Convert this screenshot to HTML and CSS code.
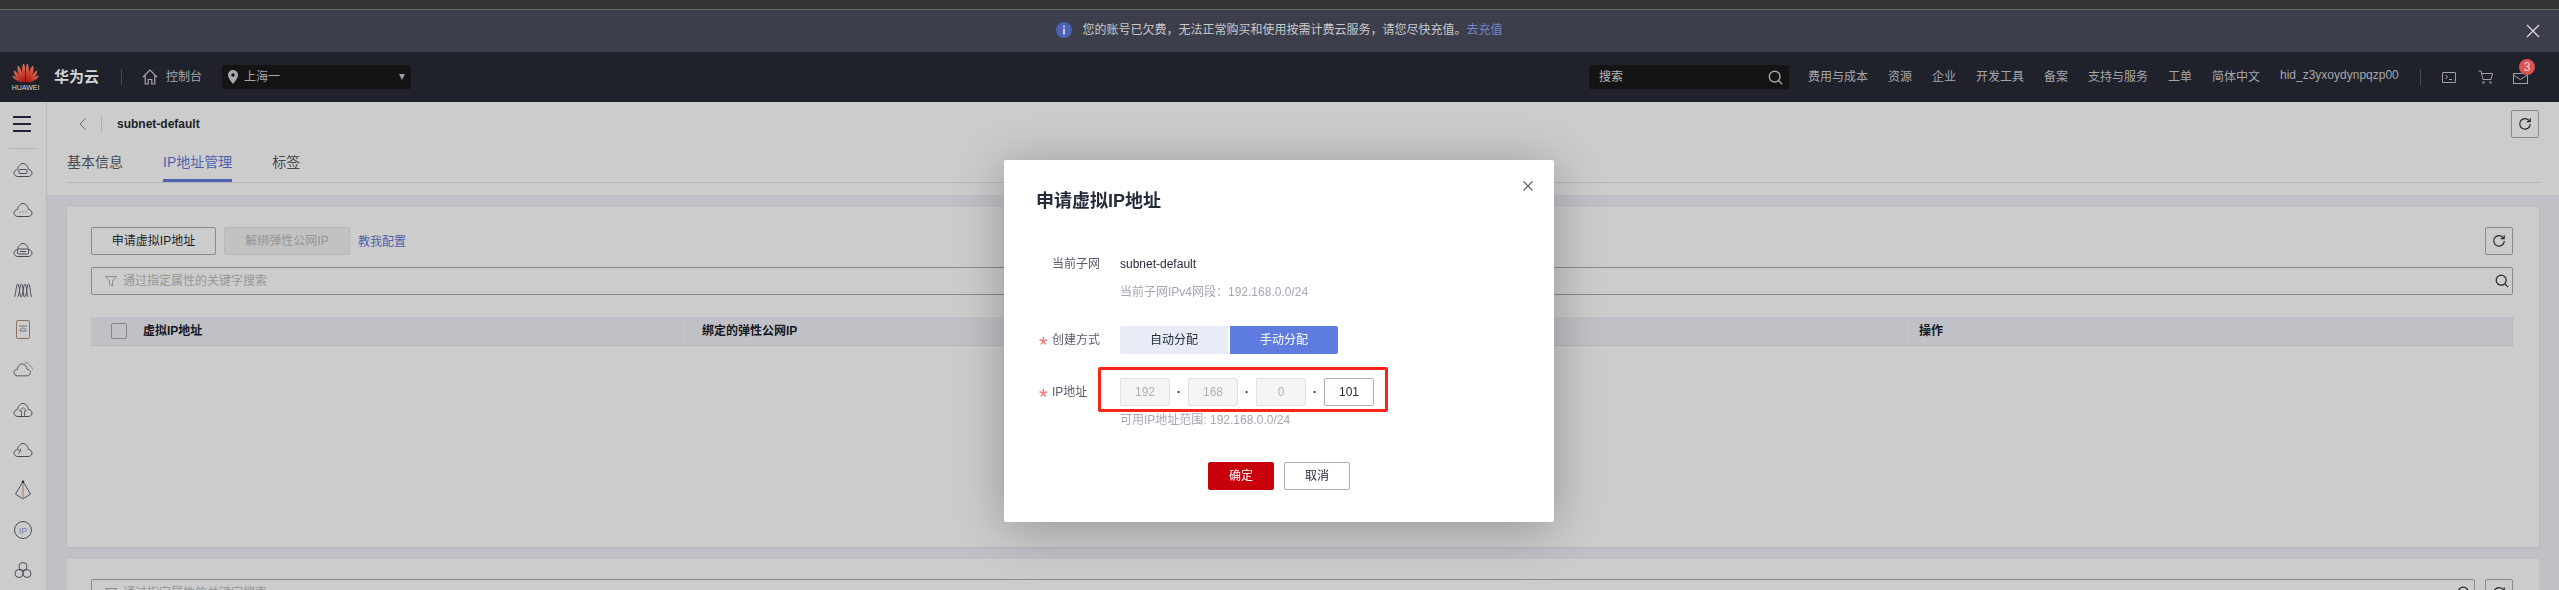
FILE: index.html
```html
<!DOCTYPE html>
<html lang="zh-CN">
<head>
<meta charset="utf-8">
<title>申请虚拟IP地址</title>
<link rel="stylesheet" href="styles.css">
</head>
<body>
<svg class="defs" width="0" height="0" aria-hidden="true">
  <defs>
    <symbol id="cloud" viewBox="0 0 20 16"><path d="M5 14.5C2.6 14.5 1 13 1 11c0-2 1.500-3.400 3.600-3.400C5 4.300 7.300 1.500 10 1.500s5 2.800 5.400 6.100C17.500 7.600 19 9 19 11c0 2-1.600 3.500-4 3.500z"/></symbol>
    <symbol id="refresh" viewBox="0 0 14 14"><path d="M11.600 4.200A5.300 5.300 0 1 0 12.300 7"/><path d="M12.200 1.300v3.400H8.800"/></symbol>
    <symbol id="search" viewBox="0 0 14 14"><circle cx="6.200" cy="6.200" r="5"/><path d="M9.800 9.800l3.400 3.400"/></symbol>
    <linearGradient id="petal" x1="0" y1="0" x2="0" y2="1"><stop offset="0" stop-color="#d9795a"/><stop offset="1" stop-color="#b3150f"/></linearGradient>
  </defs>
</svg>

<div class="strip"></div>
<div class="banner">
  <svg class="banner-icon" viewBox="0 0 16 16"><circle cx="8" cy="8" r="8" fill="#4c62b4"/><rect x="7.200" y="6.500" width="1.600" height="6" fill="#e6e8f2"/><rect x="7.200" y="3.500" width="1.600" height="1.600" fill="#e6e8f2"/></svg>
  <span class="banner-text">您的账号已欠费，无法正常购买和使用按需计费云服务，请您尽快充值。</span>
  <a class="banner-link">去充值</a>
  <svg class="banner-close" viewBox="0 0 14 14"><path d="M1 1l12 12M13 1L1 13"/></svg>
</div>

<header class="topbar">
  <div class="logo">
    <svg class="logo-mark" viewBox="0 0 27 20">
      <g fill="url(#petal)">
        <path d="M11.800 19C9.500 14 9 6 11.400 0.500c1.900 0.500 2 5 1.500 18.500z"/>
        <path d="M15.200 19C17.500 14 18 6 15.600 0.500c-1.900 0.500-2 5-1.500 18.500z"/>
        <path d="M11 19C7.500 15.500 4.500 9 5.800 2.800 7.500 3.200 9.500 6 12 19z"/>
        <path d="M16 19C19.500 15.500 22.500 9 21.200 2.800 19.500 3.200 17.500 6 15 19z"/>
        <path d="M10.500 19.200C6 16.500 2 13 1.800 7.500 3.500 7.500 6.500 11 11 19z"/>
        <path d="M16.500 19.200C21 16.500 25 13 25.200 7.500 23.500 7.500 20.500 11 16 19z"/>
        <path d="M10 19.500C5.500 18.500 1.500 16.500 0.200 12.800 2 12.300 6 15 10.500 19.500z"/>
        <path d="M17 19.500C21.500 18.500 25.500 16.500 26.800 12.800 25 12.300 21 15 16.500 19.500z"/>
      </g>
    </svg>
    <span class="logo-word">HUAWEI</span>
  </div>
  <span class="brand">华为云</span>
  <span class="vsep brand-sep"></span>
  <svg class="home-icon" viewBox="0 0 16 16"><path d="M1 8l7-7 7 7M3.200 6.500V15h3v-4.500h3.600V15h3V6.500"/></svg>
  <span class="console">控制台</span>
  <div class="region">
    <svg class="pin" viewBox="0 0 10 14"><path d="M5 0a5 5 0 0 0-5 5c0 3.300 5 9 5 9s5-5.700 5-9a5 5 0 0 0-5-5z" fill="#a9abb0"/><circle cx="5" cy="5" r="1.800" fill="#141414"/></svg>
    <span class="region-name">上海一</span>
    <span class="region-arrow"></span>
  </div>
  <div class="top-search">
    <span>搜索</span>
    <svg class="top-search-icon"><use href="#search"/></svg>
  </div>
  <nav class="nav">
    <a>费用与成本</a><a>资源</a><a>企业</a><a>开发工具</a><a>备案</a><a>支持与服务</a><a>工单</a><a>简体中文</a>
    <a class="user">hid_z3yxoydynpqzp00</a>
  </nav>
  <span class="vsep nav-sep"></span>
  <svg class="tool term" viewBox="0 0 14 11"><rect x="0.500" y="0.500" width="13" height="10" rx="0.500"/><path d="M3.500 3l2 2-2 2M7 7.500h3"/></svg>
  <svg class="tool cart" viewBox="0 0 15 14"><path d="M0.500 1h2.500l2 8.500h8L14.500 3.500H3.500"/><circle cx="5.500" cy="12.500" r="0.900"/><circle cx="12.500" cy="12.500" r="0.900"/></svg>
  <div class="mail">
    <svg class="tool mail-icon" viewBox="0 0 15 11"><rect x="0.500" y="0.500" width="14" height="10"/><path d="M0.500 2l7 4.500 7-4.500"/></svg>
    <span class="badge">3</span>
  </div>
</header>

<div class="main">
  <aside class="sidebar">
    <div class="menu"><span></span><span></span><span></span></div>
    <div class="side-rule"></div>
    <div class="side-icons">
      <svg class="side" viewBox="0 0 20 16"><use href="#cloud"/><rect x="6" y="7.500" width="8" height="4" rx="1"/></svg>
      <svg class="side" viewBox="0 0 20 16"><use href="#cloud"/><path d="M6.500 10h1M9.500 10h1M12.500 10h1"/></svg>
      <svg class="side" viewBox="0 0 20 16"><use href="#cloud"/><rect x="4.500" y="7" width="11" height="5" rx="1.200"/><path d="M7 9.500h6"/></svg>
      <svg class="side" viewBox="0 0 20 16"><path d="M1 15C2.800 15 3 2 4.800 2S6.500 15 8 15M4.600 15C6.400 15 6.600 2 8.400 2S10 15 11.600 15M8.200 15C10 15 10.200 2 12 2s1.700 13 3.300 13M11.800 15C13.600 15 13.800 2 15.600 2S17.200 15 19 15"/></svg>
      <svg class="side phone" viewBox="0 0 20 20"><rect x="3.500" y="0.500" width="13" height="18" rx="1.500" stroke="#8a7266"/><path d="M7 11c0-2 1.200-3 3-3s3 1 3 3zM6 6h8" stroke-width="0.700"/></svg>
      <svg class="side" viewBox="0 0 20 16"><use href="#cloud" transform="translate(0 0.500) scale(.92)"/><path d="M11.500 1.200c2-1 5-.2 5.600 2.800 1.600.4 2.500 2 2.200 3.500" stroke="#8b8b8b"/></svg>
      <svg class="side" viewBox="0 0 20 16"><use href="#cloud"/><path d="M10 5.500l-3.500 3.500h2v5.500h3V9h2z" stroke-width="0.800"/></svg>
      <svg class="side" viewBox="0 0 20 16"><use href="#cloud"/><path d="M4 7l3 2.500M7 10l.8-3.500M7 10l-1.500 1.800" stroke-width="0.900"/></svg>
      <svg class="side" viewBox="0 0 20 20"><path d="M10 1.500L2.500 14 10 19l7.500-5z"/><path d="M10 1.500V19" stroke="#a8784d"/><circle cx="10" cy="1.800" r="1.200" fill="#222" stroke="none"/></svg>
      <svg class="side" viewBox="0 0 20 20"><circle cx="10" cy="10" r="8.500"/><text class="ip-glyph" x="10" y="13.500">IP</text></svg>
      <svg class="side" viewBox="0 0 20 20"><circle cx="10" cy="6.500" r="4"/><circle cx="6" cy="13.500" r="4"/><circle cx="14" cy="13.500" r="4"/></svg>
    </div>
  </aside>

  <div class="content">
    <div class="page-head">
      <div class="crumb">
        <svg class="back" viewBox="0 0 8 14"><path d="M7 1L1 7l6 6"/></svg>
        <span class="crumb-sep"></span>
        <span class="crumb-title">subnet-default</span>
        <button class="icon-btn crumb-refresh"><svg class="ico"><use href="#refresh"/></svg></button>
      </div>
      <div class="tabs">
        <a class="tab">基本信息</a>
        <a class="tab active">IP地址管理</a>
        <a class="tab">标签</a>
      </div>
    </div>

    <div class="panels">
      <section class="card first">
        <div class="toolbar">
          <button class="btn">申请虚拟IP地址</button>
          <button class="btn disabled">解绑弹性公网IP</button>
          <a class="help">教我配置</a>
          <button class="icon-btn push"><svg class="ico"><use href="#refresh"/></svg></button>
        </div>
        <div class="filter">
          <svg class="funnel" viewBox="0 0 12 11"><path d="M0.500 0.500h11L7.500 5v5l-3-1.500V5z"/></svg>
          <span class="placeholder">通过指定属性的关键字搜索</span>
          <svg class="ico filter-search"><use href="#search"/></svg>
        </div>
        <div class="thead">
          <div class="th th-check"><span class="check"></span>虚拟IP地址</div>
          <div class="th">绑定的弹性公网IP</div>
          <div class="th">操作</div>
        </div>
      </section>
      <section class="card">
        <div class="toolbar">
          <div class="filter inline">
            <svg class="funnel" viewBox="0 0 12 11"><path d="M0.500 0.500h11L7.500 5v5l-3-1.500V5z"/></svg>
            <span class="placeholder">通过指定属性的关键字搜索</span>
            <svg class="ico filter-search"><use href="#search"/></svg>
          </div>
          <button class="icon-btn"><svg class="ico"><use href="#refresh"/></svg></button>
        </div>
      </section>
    </div>
  </div>
</div>

<div class="overlay">
  <div class="dialog">
    <svg class="dialog-close" viewBox="0 0 10 10"><path d="M0.500 0.500l9 9M9.500 0.500l-9 9"/></svg>
    <h2 class="dialog-title">申请虚拟IP地址</h2>
    <div class="row row-subnet">
      <span class="label">当前子网</span>
      <div class="value">subnet-default</div>
    </div>
    <div class="row row-hint">
      <span class="label"></span>
      <div class="hint">当前子网IPv4网段：192.168.0.0/24</div>
    </div>
    <div class="row row-mode">
      <span class="label"><i class="star">*</i>创建方式</span>
      <div class="seg">
        <span class="seg-item">自动分配</span>
        <span class="seg-item on">手动分配</span>
      </div>
    </div>
    <div class="row row-ip">
      <span class="label"><i class="star">*</i>IP地址</span>
      <div class="octets">
        <span class="octet off">192</span><span class="dot">·</span>
        <span class="octet off">168</span><span class="dot">·</span>
        <span class="octet off">0</span><span class="dot">·</span>
        <span class="octet">101</span>
        <span class="redbox"></span>
      </div>
    </div>
    <div class="row row-range">
      <span class="label"></span>
      <div class="hint">可用IP地址范围: 192.168.0.0/24</div>
    </div>
    <div class="actions">
      <button class="act primary">确定</button>
      <button class="act">取消</button>
    </div>
  </div>
</div>
</body>
</html>
```
FILE: styles.css
```css
* { box-sizing: border-box; }
html, body { margin: 0; height: 590px; overflow: hidden; }
body {
  background: #ccc;
  color: #1f2330;
  font-family: "Liberation Sans", "Noto Sans CJK SC", sans-serif;
  font-size: 12px;
  line-height: 20px;
}
button { font: inherit; padding: 0; cursor: default; }
.defs { position: absolute; }

.strip { height: 10px; background: #333; border-bottom: 1px solid #6a6a6c; }

.banner {
  position: relative;
  height: 42px;
  background: #3c3f4b;
  display: flex;
  align-items: center;
  justify-content: center;
  color: #c9cacc;
  padding-bottom: 2px;
}
.banner-icon { width: 16px; height: 16px; margin-right: 10px; }
.banner-text { width: 384px; }
.banner-link { color: #7485c9; margin-left: 0; }
.banner-close {
  position: absolute;
  right: 19px;
  top: 14px;
  width: 14px;
  height: 14px;
  fill: none;
  stroke: #d8d8da;
  stroke-width: 1.400;
}

.topbar {
  height: 50px;
  background: #1f222b;
  display: flex;
  align-items: center;
  padding: 0 31px 0 12px;
  color: #a6a7ab;
}
.logo { width: 27px; display: flex; flex-direction: column; align-items: center; }
.logo-mark { width: 27px; height: 20px; display: block; }
.logo-word { font-size: 7px; line-height: 8px; color: #d8d8d8; margin-top: 1px; }
.brand { margin-left: 15px; font-size: 15px; font-weight: 700; color: #d5d5d6; width: 45px; }
.vsep { width: 1px; height: 16px; background: #474a52; }
.brand-sep { margin-left: 22px; }
.home-icon {
  width: 16px; height: 16px; margin-left: 20px;
  fill: none; stroke: #a6a7ab; stroke-width: 1.200;
}
.console { margin-left: 8px; width: 36px; }
.region {
  margin-left: 20px;
  width: 189px;
  height: 24px;
  background: #141414;
  border-radius: 2px;
  display: flex;
  align-items: center;
  padding: 0 6px;
}
.pin { width: 10px; height: 14px; }
.region-name { margin-left: 6px; }
.region-arrow {
  margin-left: auto;
  border-style: solid;
  border-width: 6px 3.500px 0;
  border-color: #9b9da2 transparent transparent;
}
.top-search {
  margin-left: auto;
  width: 200px;
  height: 24px;
  background: #141414;
  border-radius: 2px;
  display: flex;
  align-items: center;
  justify-content: space-between;
  padding: 0 6px 0 10px;
  color: #b8b9bc;
}
.top-search-icon { width: 15px; height: 15px; fill: none; stroke: #a6a7ab; stroke-width: 1.300; }
.nav { display: flex; gap: 20px; margin-left: 19px; }
.user { width: 120px; margin-top: -2px; }
.nav-sep { margin-left: 20px; }
.tool { fill: none; stroke: #a0a1a6; stroke-width: 1; }
.term { width: 14px; height: 11px; margin-left: 21px; }
.cart { width: 15px; height: 14px; margin-left: 22px; }
.mail { position: relative; margin-left: 20px; display: flex; }
.mail-icon { width: 15px; height: 11px; margin-top: 3px; }
.badge {
  position: absolute;
  left: 6px;
  top: -11px;
  width: 16px;
  height: 16px;
  border-radius: 50%;
  background: #d9534f;
  color: #f3d9d8;
  text-align: center;
  line-height: 16px;
}

.main { display: flex; height: 488px; }
.sidebar { width: 47px; flex: none; border-right: 1px solid #b9b9b9; background: #ccc; }
.menu { display: flex; flex-direction: column; gap: 5px; padding: 14px 0 0 13px; height: 46px; }
.menu span { width: 18px; height: 2px; background: #1f2238; }
.side-rule { height: 1px; margin: 0 9px; background: #b5b5b5; }
.side-icons { display: flex; flex-direction: column; align-items: center; padding-top: 1px; }
.side {
  width: 20px;
  height: 20px;
  margin: 10px 0;
  fill: none;
  stroke: #4d4f5a;
  stroke-width: 1;
  flex: none;
}
.ip-glyph {
  font-family: "Liberation Sans", sans-serif;
  font-size: 9px;
  fill: #7778a0;
  stroke: none;
  text-anchor: middle;
}

.content { flex: 1; display: flex; flex-direction: column; min-width: 0; }
.page-head { height: 93px; flex: none; background: #ccc; padding: 8px 20px 0; }
.crumb { display: flex; align-items: center; height: 28px; padding-left: 12px; }
.back { width: 8px; height: 14px; fill: none; stroke: #6b6b70; stroke-width: 1; }
.crumb-sep { width: 1px; height: 16px; background: #b0b0b0; margin-left: 14px; }
.crumb-title { margin-left: 15px; font-weight: 700; color: #1c1f28; }
.crumb-refresh { margin-left: auto; }

.icon-btn {
  width: 28px;
  height: 28px;
  flex: none;
  background: transparent;
  border: 1px solid #88898f;
  border-radius: 2px;
  display: flex;
  align-items: center;
  justify-content: center;
}
.ico { width: 14px; height: 14px; fill: none; stroke: #23262f; stroke-width: 1.200; }

.tabs { display: flex; gap: 40px; height: 45px; border-bottom: 1px solid #b4b4b4; }
.tab {
  height: 44px;
  padding-top: 14px;
  font-size: 14px;
  color: #474a52;
  border-bottom: 3px solid transparent;
}
.tab.active { color: #4f62b0; border-bottom-color: #4f62b0; }

.panels {
  flex: 1;
  min-height: 0;
  overflow: hidden;
  background: #c0c1c6;
  padding: 12px 20px 0;
  display: flex;
  flex-direction: column;
  gap: 12px;
}
.card { background: #ccc; padding: 20px 26px 20px 24px; flex: none; }
.card.first { height: 340px; box-shadow: 0 1px 2px rgba(0,0,0,.08); }
.toolbar { display: flex; align-items: center; gap: 8px; height: 28px; }
.btn {
  width: 125px;
  height: 28px;
  background: transparent;
  border: 1px solid #88898f;
  border-radius: 2px;
  color: #1c1f28;
}
.btn.disabled { width: 126px; background: #c2c2c2; border-color: #b7b7b7; color: #949494; }
.help { color: #4c5fad; margin-top: 1px; }
.push { margin-left: auto; }

.filter {
  height: 28px;
  margin-top: 12px;
  border: 1px solid #88898f;
  border-radius: 2px;
  display: flex;
  align-items: center;
  padding: 0 3px 0 13px;
}
.filter.inline { margin-top: 0; flex: 1; margin-right: 2px; }
.funnel { width: 12px; height: 11px; fill: none; stroke: #8a8a8f; stroke-width: 1; }
.placeholder { margin-left: 6px; color: #979797; }
.filter-search { margin-left: auto; }

.thead {
  margin-top: 22px;
  height: 29px;
  background: #c0c1c6;
  border-bottom: 1px solid #b4b5ba;
  display: grid;
  grid-template-columns: 597px 1217px 1fr;
  align-items: center;
  color: #16181f;
  font-weight: 700;
  font-size: 12px;
}
.th { padding-left: 14px; height: 28px; line-height: 28px; border-right: 1px solid #bcbdc2; display: flex; align-items: center; }
.th-check { padding-left: 20px; }
.check {
  width: 16px;
  height: 16px;
  border: 1px solid #85868c;
  border-radius: 2px;
  margin-right: 16px;
}

.overlay {
  position: fixed;
  left: 0;
  top: 0;
  right: 0;
  bottom: 0;
  display: flex;
  justify-content: center;
  align-items: flex-start;
  padding-top: 160px;
}
.dialog {
  position: relative;
  width: 550px;
  height: 362px;
  margin-left: -1px;
  background: #fff;
  border-radius: 2px;
  padding: 29px 32px 0;
  box-shadow: 0 6px 50px rgba(0, 0, 0, .28);
  color: #575d6c;
}
.dialog-close {
  position: absolute;
  right: 21px;
  top: 21px;
  width: 10px;
  height: 10px;
  fill: none;
  stroke: #575d6c;
  stroke-width: 1.100;
}
.dialog-title { margin: 0; font-size: 18px; line-height: 24px; color: #252b3a; font-weight: 700; }
.row { display: flex; }
.label { width: 64px; flex: none; padding-left: 16px; margin-right: 20px; white-space: nowrap; position: relative; }
.star {
  position: absolute;
  font-style: normal;
  color: #f66f6a;
  font-size: 22px;
  line-height: 20px;
  left: 3px;
  top: 5px;
}
.row-subnet { margin-top: 41px; }
.value { color: #252b3a; }
.row-hint { margin-top: 8px; }
.hint { color: #a5a8b0; }
.row-mode { margin-top: 24px; align-items: center; height: 28px; }
.seg { display: flex; gap: 2px; }
.seg-item {
  width: 108px;
  height: 28px;
  line-height: 28px;
  text-align: center;
  background: #e8ecf7;
  color: #252b3a;
  border-radius: 2px 0 0 2px;
}
.seg-item.on { background: #5e7ce0; color: #fff; border-radius: 0 2px 2px 0; }
.row-ip { margin-top: 24px; align-items: center; height: 28px; }
.octets { position: relative; display: flex; align-items: center; }
.octet {
  width: 50px;
  height: 28px;
  line-height: 26px;
  text-align: center;
  border: 1px solid #adb0b8;
  border-radius: 2px;
  color: #252b3a;
}
.octet.off { background: #f5f5f6; border-color: #dfe1e6; color: #adb0b8; }
.dot { width: 18px; text-align: center; color: #252b3a; font-weight: 700; }
.redbox {
  position: absolute;
  left: -22px;
  right: -14px;
  top: -11px;
  bottom: -6px;
  border: 3px solid #fb2418;
  border-radius: 2px;
}
.row-range { margin-top: 4px; }
.actions { display: flex; justify-content: center; gap: 10px; margin-top: 32px; }
.act {
  width: 66px;
  height: 28px;
  background: #fff;
  border: 1px solid #adb0b8;
  border-radius: 2px;
  color: #252b3a;
}
.act.primary { background: #c7000b; border-color: #c7000b; color: #fff; }
```
